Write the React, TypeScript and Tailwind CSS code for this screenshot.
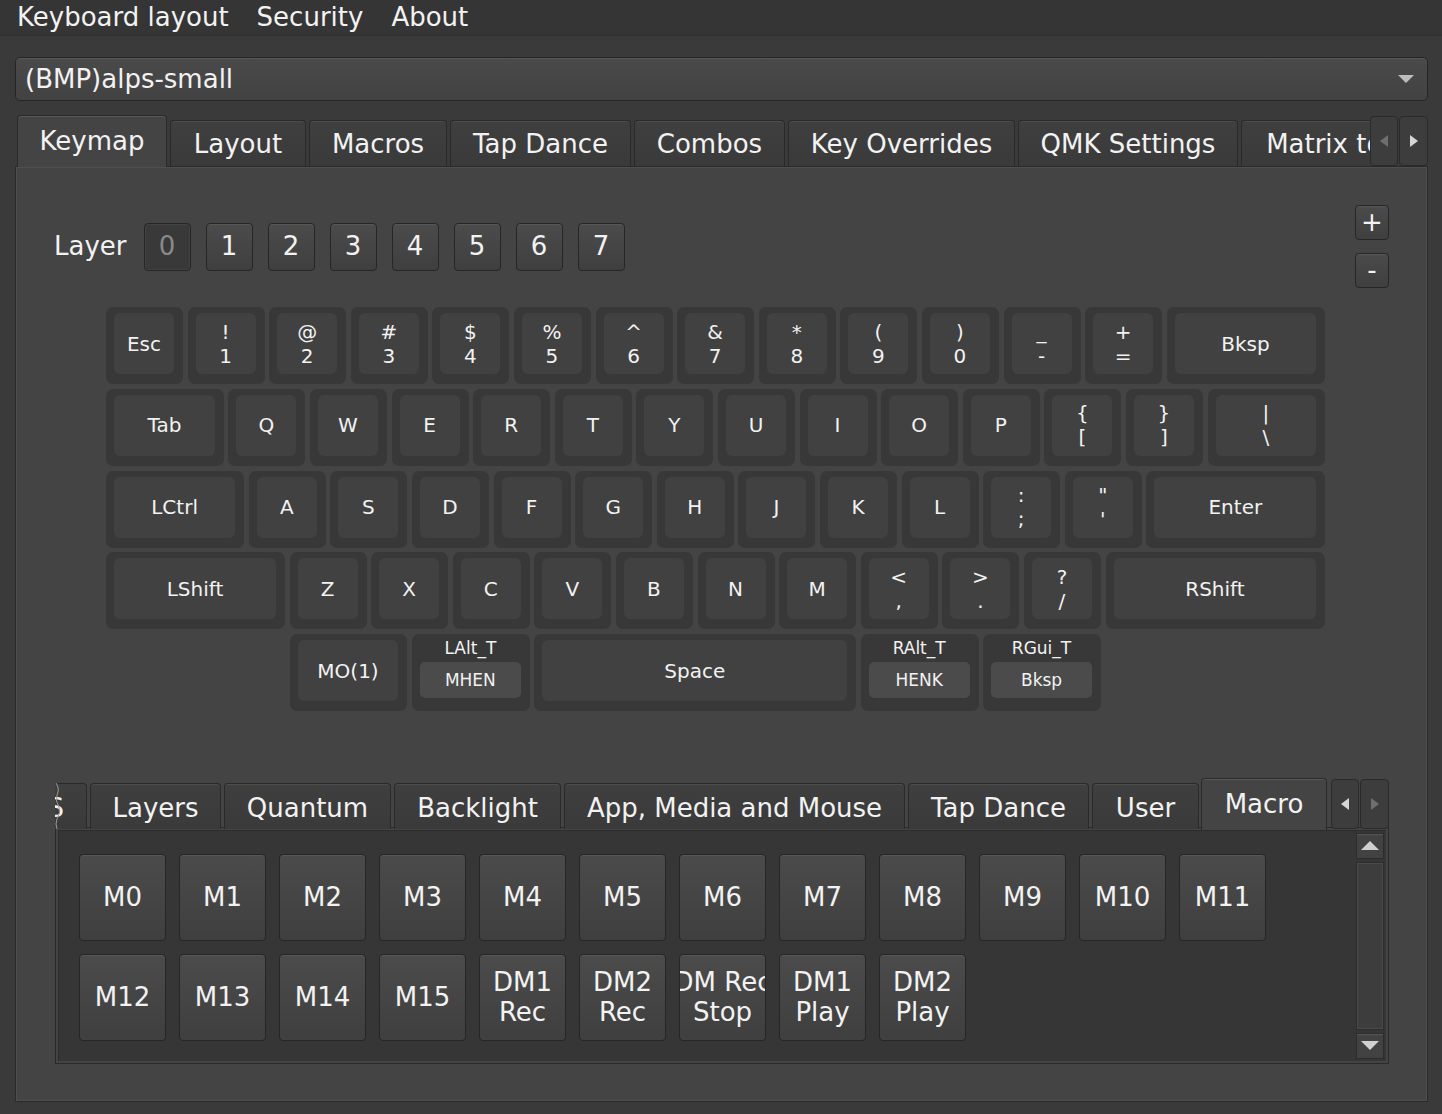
import React from 'react';

const U = 81.6;

type KeyDef = { l: string; w: number; top?: string };

const k = (l: string, w = 1, top?: string): KeyDef => ({ l, w, top });

const rows: { offset: number; keys: KeyDef[] }[] = [
  {
    offset: 0,
    keys: [
      k('Esc'), k('!\n1'), k('@\n2'), k('#\n3'), k('$\n4'), k('%\n5'), k('^\n6'),
      k('&\n7'), k('*\n8'), k('(\n9'), k(')\n0'), k('_\n-'), k('+\n='), k('Bksp', 2),
    ],
  },
  {
    offset: 0,
    keys: [k('Tab', 1.5), ...'QWERTYUIOP'.split('').map((c) => k(c)), k('{\n['), k('}\n]'), k('|\n\\', 1.5)],
  },
  {
    offset: 0,
    keys: [k('LCtrl', 1.75), ...'ASDFGHJKL'.split('').map((c) => k(c)), k(':\n;'), k('"\n\''), k('Enter', 2.25)],
  },
  {
    offset: 0,
    keys: [k('LShift', 2.25), ...'ZXCVBNM'.split('').map((c) => k(c)), k('<\n,'), k('>\n.'), k('?\n/'), k('RShift', 2.75)],
  },
  {
    offset: 2.25,
    keys: [k('MO(1)', 1.5), k('MHEN', 1.5, 'LAlt_T'), k('Space', 4), k('HENK', 1.5, 'RAlt_T'), k('Bksp', 1.5, 'RGui_T')],
  },
];

const topTabs = [
  { label: 'Keymap', w: 150 },
  { label: 'Layout', w: 136 },
  { label: 'Macros', w: 138 },
  { label: 'Tap Dance', w: 181 },
  { label: 'Combos', w: 151 },
  { label: 'Key Overrides', w: 227 },
  { label: 'QMK Settings', w: 220 },
  { label: 'Matrix tester', w: 217 },
];

const bottomTabs = [
  { label: 'Layers', w: 131 },
  { label: 'Quantum', w: 167 },
  { label: 'Backlight', w: 167 },
  { label: 'App, Media and Mouse', w: 341 },
  { label: 'Tap Dance', w: 181 },
  { label: 'User', w: 107 },
];

const macros = [
  'M0', 'M1', 'M2', 'M3', 'M4', 'M5', 'M6', 'M7', 'M8', 'M9', 'M10', 'M11',
  'M12', 'M13', 'M14', 'M15', 'DM1\nRec', 'DM2\nRec', 'DM Rec\nStop', 'DM1\nPlay', 'DM2\nPlay',
];

const qtButton =
  'border border-[#262626] rounded-[4px] bg-linear-to-b from-[#4b4b4b] to-[#3f3f3f] shadow-[inset_0_1px_0_#575757]';

const Key: React.FC<{ def: KeyDef }> = ({ def }) => {
  const w = def.w * U;
  return (
    <div className="h-[81.75px] shrink-0" style={{ width: w }}>
      {def.top ? (
        <div
          className="flex h-[77px] flex-col rounded-[7px] bg-[#383838] pb-[13px] pl-[8px] pr-[9px] pt-[3px]"
          style={{ width: w - 4.6 }}
        >
          <div className="h-[22px] text-center text-[17px] leading-[22px]">{def.top}</div>
          <div className="mt-[3px] flex flex-1 items-center justify-center rounded-[5px] bg-[#4b4b4b] pt-px text-[17px]">
            {def.l}
          </div>
        </div>
      ) : (
        <div
          className="h-[77px] rounded-[7px] bg-[#383838] pb-[10px] pl-[8px] pr-[9px] pt-[6px]"
          style={{ width: w - 4.6 }}
        >
          <div className="flex h-full flex-col items-center justify-center rounded-[6px] bg-[#414141] text-[20px] leading-[24px]">
            {def.l.split('\n').map((line, i) => (
              <span key={i} className="whitespace-pre">{line}</span>
            ))}
          </div>
        </div>
      )}
    </div>
  );
};

const Tri: React.FC<{ dir: 'left' | 'right' | 'up' | 'down'; color: string; size?: number }> = ({ dir, color, size = 12 }) => {
  const pts = {
    left: '8,0 8,12 0,6',
    right: '0,0 0,12 8,6',
    up: '0,8 16,8 8,0',
    down: '0,0 16,0 8,8',
  }[dir];
  const vb = dir === 'left' || dir === 'right' ? '0 0 8 12' : '0 0 16 8';
  const wh = dir === 'left' || dir === 'right' ? { w: (size * 8) / 12, h: size } : { w: size + 4, h: (size + 4) / 2 };
  return (
    <svg width={wh.w} height={wh.h} viewBox={vb}>
      <polygon points={pts} fill={color} />
    </svg>
  );
};

const TabHead: React.FC<{ label: string; w: number; active?: boolean; tall: number; short: number; padTop: string }> = ({
  label,
  w,
  active,
  tall,
  short,
  padTop,
}) =>
  active ? (
    <div
      className="flex shrink-0 items-center justify-center rounded-t-[4px] border border-b-0 border-[#2a2a2a] bg-[#444444] shadow-[inset_0_1px_0_#595959] whitespace-nowrap"
      style={{ width: w, height: tall }}
    >
      {label}
    </div>
  ) : (
    <div
      className={`mb-px flex shrink-0 items-center justify-center rounded-t-[4px] border border-b-0 border-[#2a2a2a] bg-linear-to-b from-[#3f3f3f] to-[#3a3a3a] shadow-[inset_0_1px_0_#4d4d4d] whitespace-nowrap ${padTop}`}
      style={{ width: w, height: short }}
    >
      {label}
    </div>
  );

const ScrollArrows: React.FC<{ leftOn: boolean }> = ({ leftOn }) => (
  <div className="flex h-full shrink-0 items-start gap-px pt-px">
    <div className="flex h-[50px] w-[28px] items-center justify-center rounded-[4px] border border-[#2a2a2a] bg-[#3d3d3d]">
      <Tri dir="left" color={leftOn ? '#d6d6d6' : '#6e6e6e'} />
    </div>
    <div className="flex h-[50px] w-[29px] items-center justify-center rounded-[4px] border border-[#2a2a2a] bg-[#3d3d3d]">
      <Tri dir="right" color={leftOn ? '#6e6e6e' : '#d6d6d6'} />
    </div>
  </div>
);

export default function App() {
  return (
    <div className="h-[1114px] w-[1442px] overflow-hidden bg-[#3a3a3a] font-['DejaVu_Sans',sans-serif] text-[26px] text-[#f2f2f2]">
      {/* menu bar */}
      <div className="flex h-[36px] items-center border-b border-[#303030] bg-[#353535] px-[3px]">
        <span className="px-[14px]">Keyboard layout</span>
        <span className="px-[14px]">Security</span>
        <span className="px-[14px]">About</span>
      </div>

      <div className="pl-[15px] pr-[14px] pt-[21px]">
        {/* keyboard selector */}
        <div className="flex h-[44px] items-center justify-between rounded-[5px] border border-[#262626] bg-linear-to-b from-[#4a4a4a] to-[#424242] pl-[9px] pr-[13px] shadow-[inset_0_1px_0_#565656]">
          <span>(BMP)alps-small</span>
          <Tri dir="down" color="#bdbdbd" size={12} />
        </div>

        {/* main tab widget */}
        <div className="mt-[14px]">
          <div className="relative z-10 flex h-[52px] items-end">
            <div className="flex h-full min-w-0 flex-1 items-end gap-[3px] overflow-hidden pl-[2px]">
              {topTabs.map((t, i) => (
                <TabHead key={t.label} label={t.label} w={t.w} active={i === 0} tall={52} short={46} padTop="pt-[2px]" />
              ))}
            </div>
            <ScrollArrows leftOn={false} />
          </div>

          <div className="-mt-px flex h-[936px] flex-col border border-[#2a2a2a] bg-[#444444] p-[38px] shadow-[inset_0_0_0_1px_#4e4e4e]">
            {/* layer selector + add/remove */}
            <div className="flex h-[83px] items-center justify-between">
              <div className="flex items-center gap-[15px]">
                <span className="mr-[2px]">Layer</span>
                {[0, 1, 2, 3, 4, 5, 6, 7].map((n) =>
                  n === 0 ? (
                    <div
                      key={n}
                      className="flex h-[48px] w-[47px] items-center justify-center rounded-[4px] border border-[#262626] bg-[#393939] text-[#8a8a8a] shadow-[inset_0_0_0_1px_#424242]"
                    >
                      {n}
                    </div>
                  ) : (
                    <div key={n} className={`flex h-[48px] w-[47px] items-center justify-center ${qtButton}`}>
                      {n}
                    </div>
                  ),
                )}
              </div>
              <div className="flex flex-col gap-[13px]">
                <div className={`flex h-[35px] w-[34px] items-center justify-center ${qtButton}`}>+</div>
                <div className={`flex h-[35px] w-[34px] items-center justify-center ${qtButton}`}>-</div>
              </div>
            </div>

            {/* keyboard */}
            <div className="ml-[52px] mt-[19px] flex flex-col">
              {rows.map((row, ri) => (
                <div key={ri} className="flex">
                  {row.offset > 0 && <div className="shrink-0" style={{ width: row.offset * U }} />}
                  {row.keys.map((def, ki) => (
                    <Key key={ki} def={def} />
                  ))}
                </div>
              ))}
            </div>

            {/* keycode tab widget */}
            <div className="ml-px mt-[62px]">
              <div className="relative z-10 flex h-[52px] items-end">
                <div className="flex h-full min-w-0 flex-1 items-end gap-[3px] overflow-hidden">
                  <div className="relative mb-px flex h-[46px] w-[32px] shrink-0 justify-end overflow-hidden">
                    <div className="flex h-full w-[150px] shrink-0 items-center justify-end rounded-t-[4px] border border-b-0 border-[#2a2a2a] bg-linear-to-b from-[#3f3f3f] to-[#3a3a3a] pr-[22px] pt-[4px]">
                      ISO/JIS
                    </div>
                    <svg className="absolute left-0 top-0" width="6" height="46" viewBox="0 0 6 46">
                      <path
                        d="M1 0 Q5 6 2 12 Q0 18 4 24 Q6 30 2 36 Q0 41 2 46"
                        fill="none"
                        stroke="#9a9a9a"
                        strokeWidth="1"
                      />
                    </svg>
                  </div>
                  {bottomTabs.map((t) => (
                    <TabHead key={t.label} label={t.label} w={t.w} tall={52} short={46} padTop="pt-[4px]" />
                  ))}
                  <div className="-ml-px">
                    <TabHead label="Macro" w={126} active tall={52} short={46} padTop="pt-[4px]" />
                  </div>
                </div>
                <div className="ml-[2px] h-full">
                  <ScrollArrows leftOn />
                </div>
              </div>

              <div className="-mt-[3px] flex h-[237px] border border-[#2a2a2a] bg-[#444444] p-[2px]">
                <div className="flex flex-1 border-l border-t border-[#2c2c2c] bg-[#363636]">
                  <div className="flex-1 pl-[20px] pt-[23px]">
                    <div className="grid grid-cols-[repeat(12,87px)] gap-[13px]">
                      {macros.map((m) => (
                        <div
                          key={m}
                          className={`flex h-[87px] w-[87px] flex-col items-center justify-center overflow-hidden leading-[30px] ${qtButton}`}
                        >
                          {m.split('\n').map((line, i) => (
                            <span key={i} className="whitespace-nowrap">{line}</span>
                          ))}
                        </div>
                      ))}
                    </div>
                  </div>
                  {/* scrollbar */}
                  <div className="mr-[2px] flex w-[28px] flex-col gap-[3px] py-[2px]">
                    <div className="flex h-[26px] items-center justify-center border border-[#2c2c2c] bg-[#424242] shadow-[inset_0_1px_0_#555]">
                      <Tri dir="up" color="#d0d0d0" size={14} />
                    </div>
                    <div className="flex-1 border border-[#2c2c2c] bg-[#3d3d3d] shadow-[inset_0_0_0_1px_#4a4a4a]" />
                    <div className="flex h-[26px] items-center justify-center border border-[#2c2c2c] bg-[#424242] shadow-[inset_0_1px_0_#555]">
                      <Tri dir="down" color="#d0d0d0" size={14} />
                    </div>
                  </div>
                </div>
              </div>
            </div>
          </div>
        </div>
      </div>
    </div>
  );
}
